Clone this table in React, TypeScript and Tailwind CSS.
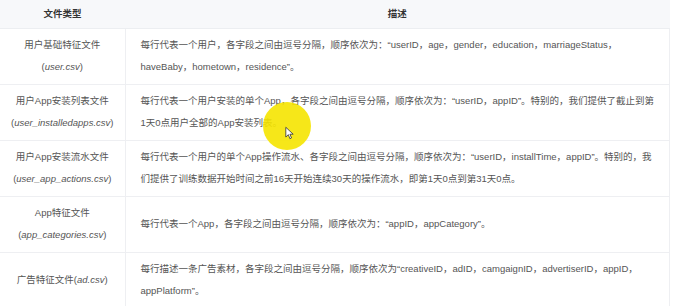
const rows = [
  {
    name: "用户基础特征文件",
    file: "user.csv",
    desc: "每行代表一个用户，各字段之间由逗号分隔，顺序依次为：“userID，age，gender，education，marriageStatus，haveBaby，hometown，residence”。",
  },
  {
    name: "用户App安装列表文件",
    file: "user_installedapps.csv",
    desc: "每行代表一个用户安装的单个App，各字段之间由逗号分隔，顺序依次为：“userID，appID”。特别的，我们提供了截止到第1天0点用户全部的App安装列表。",
  },
  {
    name: "用户App安装流水文件",
    file: "user_app_actions.csv",
    desc: "每行代表一个用户的单个App操作流水、各字段之间由逗号分隔，顺序依次为：“userID，installTime，appID”。特别的，我们提供了训练数据开始时间之前16天开始连续30天的操作流水，即第1天0点到第31天0点。",
  },
  {
    name: "App特征文件",
    file: "app_categories.csv",
    desc: "每行代表一个App，各字段之间由逗号分隔，顺序依次为：“appID，appCategory”。",
  },
  {
    name: "广告特征文件",
    file: "ad.csv",
    inline: true,
    desc: "每行描述一条广告素材，各字段之间由逗号分隔，顺序依次为“creativeID，adID，camgaignID，advertiserID，appID，appPlatform”。",
  },
];

export default function App() {
  return (
    <div className="relative w-[673px] h-[306px] overflow-hidden bg-white font-['Liberation_Sans','Noto_Sans_CJK_SC',sans-serif] text-[9.5px] text-[#555]">
      <table className="w-[670px] border-collapse table-fixed">
        <colgroup>
          <col className="w-[125px]" />
          <col />
        </colgroup>
        <thead>
          <tr className="h-[28px] bg-[#f7f8fa] text-[#333]">
            <th className="text-center font-bold border-b border-[#eceef1]">文件类型</th>
            <th className="text-center font-bold border-b border-[#eceef1]">描述</th>
          </tr>
        </thead>
        <tbody>
          {rows.map((r) => (
            <tr key={r.file} className="h-[56px]">
              <td className="text-center align-middle leading-[22px] border-b border-r border-[#eeeff2] px-1">
                {r.inline ? (
                  <div>
                    {r.name}(<i>{r.file}</i>)
                  </div>
                ) : (
                  <>
                    <div>{r.name}</div>
                    <div>
                      (<i>{r.file}</i>)
                    </div>
                  </>
                )}
              </td>
              <td className="align-middle leading-[22px] border-b border-r border-[#eeeff2] pl-[15px] pr-[12px]">
                {r.desc}
              </td>
            </tr>
          ))}
        </tbody>
      </table>
      {/* highlight under the mouse pointer */}
      <div className="absolute left-[263px] top-[102px] w-[48px] h-[48px] rounded-full bg-[#f5e400]/90" />
      <svg className="absolute left-[285px] top-[126px]" width="9" height="14" viewBox="0 0 11 16">
        <path d="M1 1 L1 13 L4 10 L6 15 L8 14 L6 9.5 L10 9.5 Z" fill="#fff" stroke="#333" strokeWidth="1" strokeLinejoin="round" />
      </svg>
    </div>
  );
}
